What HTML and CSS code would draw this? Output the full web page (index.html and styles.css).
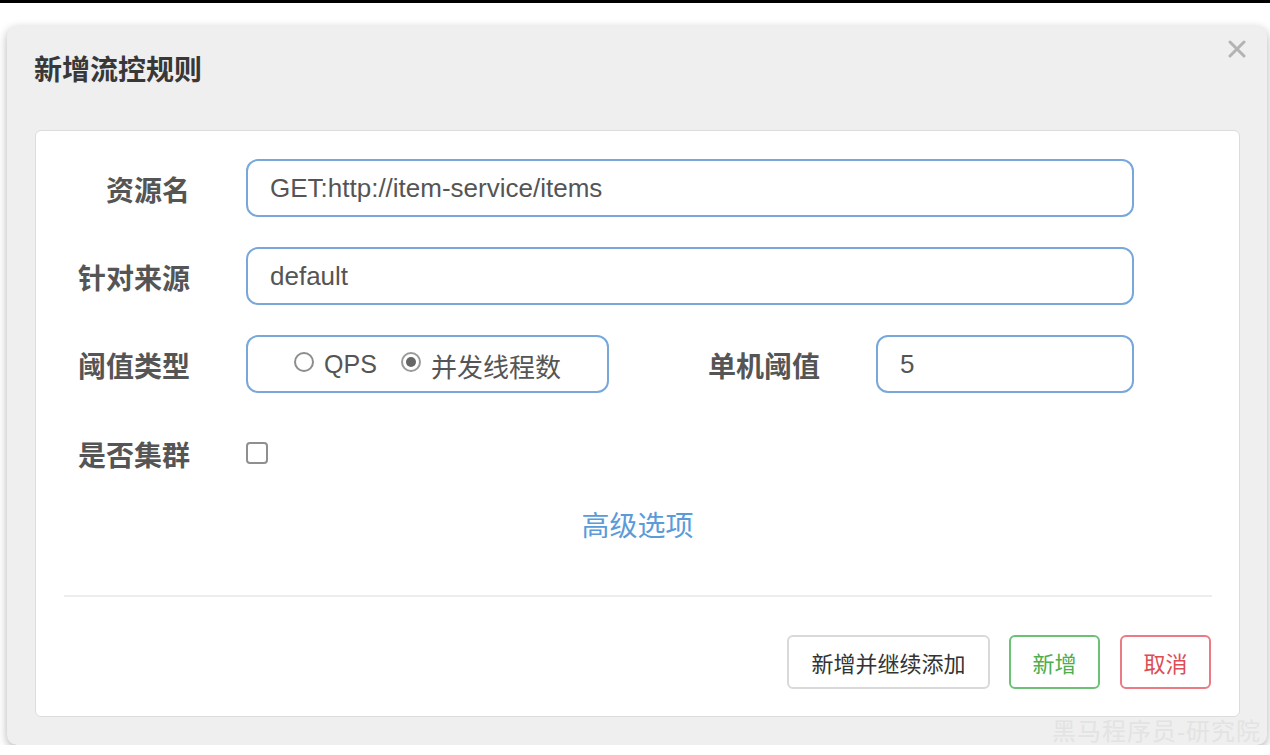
FILE: index.html
```html
<!DOCTYPE html>
<html lang="zh-CN">
<head>
<meta charset="utf-8">
<title>新增流控规则</title>
<link rel="stylesheet" href="styles.css">
</head>
<body>
<div class="topbar"></div>
<div class="modal">
  <button class="close" aria-label="关闭">
    <svg width="18" height="18" viewBox="0 0 18 18"><path d="M2 2 L16 16 M16 2 L2 16" stroke="#b3b3b3" stroke-width="3" stroke-linecap="round"/></svg>
  </button>
  <div class="header">
    <h4 class="title">新增流控规则</h4>
  </div>
  <div class="panel">
    <div class="row">
      <label class="label">资源名</label>
      <div class="input wide">GET:http://item-service/items</div>
    </div>
    <div class="row">
      <label class="label">针对来源</label>
      <div class="input wide">default</div>
    </div>
    <div class="row">
      <label class="label">阈值类型</label>
      <div class="input radios">
        <span class="radio"></span><span class="rtext">QPS</span>
        <span class="radio checked"></span><span class="rtext">并发线程数</span>
      </div>
      <label class="label label2">单机阈值</label>
      <div class="input small">5</div>
    </div>
    <div class="row row4">
      <label class="label">是否集群</label>
      <span class="checkbox"></span>
    </div>
    <div class="advanced">高级选项</div>
    <div class="divider"></div>
    <div class="buttons">
      <button class="btn btn-default">新增并继续添加</button>
      <button class="btn btn-success">新增</button>
      <button class="btn btn-danger">取消</button>
    </div>
  </div>
  <div class="watermark">黑马程序员-研究院</div>
</div>
</body>
</html>
```

FILE: styles.css
```css
html, body {
  margin: 0;
  padding: 0;
  background: #ffffff;
  font-family: "Liberation Sans", "Noto Sans CJK SC", sans-serif;
}

.topbar {
  height: 3px;
  background: #000;
}

.modal {
  position: relative;
  margin: 23px 0 0 7px;
  width: 1260px;
  box-sizing: border-box;
  padding: 0 27px 28px 28px;
  background: #efefef;
  border-radius: 10px;
  box-shadow: 0 3px 10px rgba(0, 0, 0, 0.3);
}

.close {
  position: absolute;
  top: 14px;
  right: 21px;
  width: 18px;
  height: 18px;
  padding: 0;
  border: 0;
  background: transparent;
  display: block;
}
.close svg { display: block; }

.header {
  height: 104px;
  box-sizing: border-box;
  padding-top: 25px;
}

.title {
  margin: 0 0 0 -1px;
  font-size: 28px;
  line-height: 40px;
  font-weight: bold;
  color: #383838;
}

.panel {
  background: #fff;
  border: 1px solid #dcdcdc;
  border-radius: 6px;
  padding: 28px 0 27px 0;
}

.row {
  display: flex;
  align-items: center;
  height: 58px;
  margin-bottom: 30px;
}

.row4 {
  height: 60px;
  margin-bottom: 0;
}

.label {
  width: 154px;
  flex: none;
  margin-right: 56px;
  padding-top: 7px;
  text-align: right;
  font-size: 28px;
  font-weight: bold;
  color: #555;
  line-height: 40px;
}

.label2 {
  width: 211px;
}

.input {
  box-sizing: border-box;
  height: 58px;
  border: 2px solid #78a8da;
  border-radius: 12px;
  padding-left: 22px;
  display: flex;
  align-items: center;
  font-size: 26px;
  color: #555;
  flex: none;
}

.wide { width: 888px; }
.small { width: 258px; }

.radios {
  width: 363px;
  padding-left: 0;
  justify-content: center;
}

.radio {
  width: 20px;
  height: 20px;
  box-sizing: border-box;
  border: 2px solid #8d8d8d;
  border-radius: 50%;
  background: #fff;
  flex: none;
  margin-right: 10px;
  margin-top: -4px;
  position: relative;
}

.radio.checked {
  border-color: #9a9a9a;
  margin-left: 24px;
}

.radio.checked::after {
  content: "";
  position: absolute;
  left: 3px;
  top: 3px;
  width: 10px;
  height: 10px;
  border-radius: 50%;
  background: #666;
}

.rtext {
  font-size: 25px;
  color: #555;
}

.radios .rtext:last-child {
  font-size: 26px;
  padding-top: 3px;
}

.checkbox {
  width: 22px;
  height: 22px;
  box-sizing: border-box;
  border: 2px solid #8f8f8f;
  border-radius: 4px;
  background: #fff;
}

.advanced {
  margin-top: 21px;
  padding-top: 3px;
  text-align: center;
  font-size: 28px;
  line-height: 40px;
  color: #5b9bd8;
}

.divider {
  margin: 48px 27px 0 28px;
  height: 2px;
  background: #ededed;
}

.buttons {
  margin-top: 38px;
  padding-right: 28px;
  display: flex;
  justify-content: flex-end;
  gap: 19px;
}

.btn {
  height: 54px;
  box-sizing: border-box;
  border-radius: 6px;
  background: #fff;
  font-family: "Liberation Sans", "Noto Sans CJK SC", sans-serif;
  font-size: 22px;
  padding: 0;
}

.btn-default {
  width: 203px;
  border: 2px solid #d9d9d9;
  color: #333;
}

.btn-success {
  width: 91px;
  border: 2px solid #6cc176;
  color: #4cae4c;
}

.btn-danger {
  width: 91px;
  border: 2px solid #ea7a83;
  color: #dc4d55;
  margin-left: 1px;
}

.watermark {
  position: absolute;
  right: 6px;
  bottom: -2px;
  font-size: 24px;
  line-height: 30px;
  letter-spacing: 1px;
  color: #e3e3e3;
}
```
